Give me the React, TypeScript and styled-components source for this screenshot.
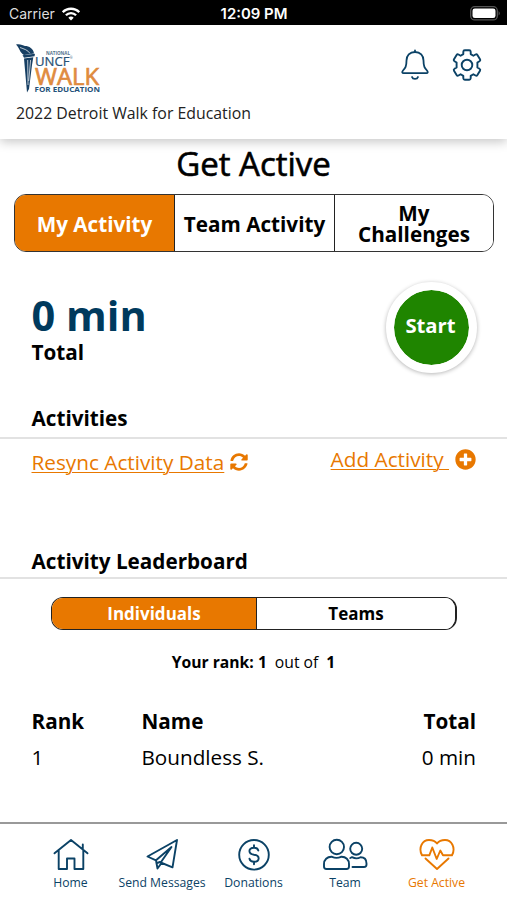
import styled, { createGlobalStyle } from "styled-components";
import { FaPlusCircle, FaSyncAlt } from "react-icons/fa";

const navy = "#0b4266";
const orange = "#e87800";

const Logo = () => (
  <svg width="86" height="54" viewBox="0 0 86 54" role="img" aria-label="UNCF">
    <g fill="#173f63">
      <path d="M0 1.500 C4 0.500 7 2.500 9 3 C13 3 17.500 5.500 18 10.500 L8 12 C3.500 9.500 4 5.500 0 1.500Z" />
      <path d="M6.500 12.300 L19 10.800 L18.500 13.200 L8 14.800Z" />
      <path d="M8 15.500 L17.300 14.300 L16 22 L13 46 L11 49.500Z" />
    </g>
    <path
      d="M4 4.500 C8 6 12 7 14 10.500 M11.700 17 L12 42 M14.600 17 L12.700 38"
      fill="none"
      stroke="#fff"
      strokeWidth="0.7"
    />
    <g fontFamily="Open Sans, sans-serif">
      <text x="30" y="12" fontSize="4.800" fontWeight="700" fill="#53708a" textLength="24" lengthAdjust="spacingAndGlyphs">
        NATIONAL
      </text>
      <text
        x="19"
        y="22.800"
        fontSize="12"
        fill="#285174"
        stroke="#285174"
        strokeWidth="0.2"
        textLength="34.500"
        lengthAdjust="spacingAndGlyphs"
      >
        UNCF
      </text>
      <text x="54" y="16" fontSize="3" fill="#285174">
        ®
      </text>
      <text
        x="19"
        y="41.700"
        fontSize="23"
        fill="#df8b3f"
        stroke="#df8b3f"
        strokeWidth="0.7"
        textLength="64"
        lengthAdjust="spacingAndGlyphs"
      >
        WALK
      </text>
      <text
        x="18.500"
        y="49.200"
        fontSize="7.200"
        fontWeight="700"
        fill="#24527a"
        textLength="65.500"
        lengthAdjust="spacingAndGlyphs"
      >
        FOR EDUCATION
      </text>
    </g>
  </svg>
);

const WifiIcon = () => (
  <svg width="18" height="14" viewBox="0 0 18 14" fill="none" stroke="#fff" strokeWidth="2.300">
    <path d="M0.800 5.200 C5.300 0.600 12.700 0.600 17.200 5.200" />
    <path d="M3.900 8.300 C6.700 5.400 11.300 5.400 14.100 8.300" />
    <path d="M9 13.500 L6.300 10.700 C7.800 9.200 10.200 9.200 11.700 10.700Z" fill="#fff" stroke="none" />
  </svg>
);

const BatteryIcon = () => (
  <svg width="31" height="15" viewBox="0 0 31 15">
    <rect x="0.700" y="0.700" width="26.600" height="13.200" rx="4" fill="none" stroke="#555" strokeWidth="1.300" />
    <rect x="2.500" y="2.500" width="23" height="9.600" rx="2.300" fill="#fff" />
    <path d="M28.600 5 Q31 7.300 28.600 9.600Z" fill="#555" />
  </svg>
);

const BellIcon = () => (
  <svg width="28" height="32" viewBox="0 0 28 32" fill="none" stroke={navy} strokeWidth="1.800" strokeLinecap="round" strokeLinejoin="round">
    <path d="M14 1.500 V3 M14 3 C8.700 3 5.500 6.800 5.500 11.500 C5.500 17.500 4.300 19 2 21.500 C0.700 23.100 1.200 24.200 2.600 24.200 H25.400 C26.800 24.200 27.300 23.100 26 21.500 C23.700 19 22.500 17.500 22.500 11.500 C22.500 6.800 19.300 3 14 3Z" />
    <path d="M11 28 C11.800 30.500 16.200 30.500 17 28" />
  </svg>
);

const GearIcon = () => (
  <svg width="32" height="32" viewBox="0 0 32 32" fill="none" stroke={navy} strokeWidth="1.900" strokeLinejoin="round">
    <path d="M12.300 2.700 Q12.400 1.300 13.800 1.300 H18.200 Q19.600 1.300 19.700 2.700 V5.100 L22.400 6.700 L24.500 5.500 Q25.700 4.900 26.400 6 L29 10.300 Q29.700 11.500 28.500 12.200 L26.400 13.500 V18.500 L28.500 19.800 Q29.700 20.500 29 21.700 L26.400 26 Q25.700 27.100 24.500 26.500 L22.400 25.300 L19.700 26.900 V29.300 Q19.600 30.700 18.200 30.700 H13.800 Q12.400 30.700 12.300 29.300 V26.900 L9.600 25.300 L7.500 26.500 Q6.300 27.100 5.600 26 L3 21.700 Q2.300 20.500 3.500 19.800 L5.600 18.500 V13.500 L3.500 12.200 Q2.300 11.500 3 10.300 L5.600 6 Q6.300 4.900 7.500 5.500 L9.600 6.700 L12.300 5.100Z" />
    <circle cx="16" cy="16" r="5.300" />
  </svg>
);

const navIconProps = {
  height: 34,
  fill: "none",
  stroke: "currentColor",
  strokeWidth: 1.9,
  strokeLinecap: "round",
  strokeLinejoin: "round",
} as const;

const HomeIcon = () => (
  <svg {...navIconProps} width="36" viewBox="0 0 36 34">
    <path d="M1.500 15.300 L18 2 L34.500 15.300 M29.800 11 V6.500 M5.700 12.500 V31 H14 V20.500 H21.500 V31 H30.300 V12.500" />
  </svg>
);

const SendIcon = () => (
  <svg {...navIconProps} width="34" viewBox="0 0 34 34">
    <path d="M32 2 L2.500 18.500 L11 22.300 L26.500 9 L15.700 24.500 L27.500 29.300Z M11 22.500 L12.500 30.500 L16.500 25 M12 25 L15 24" />
  </svg>
);

const DonateIcon = () => (
  <svg {...navIconProps} width="34" viewBox="0 0 34 34">
    <circle cx="17" cy="16.800" r="14.800" />
    <path d="M21.300 12.500 C20.800 10.500 19.200 9.800 17 9.800 C10.800 9.800 11 16 17 16.700 C23.400 17.300 23 23.700 17 23.700 C14.600 23.700 13 22.800 12.500 20.700 M17 7.300 V9.800 M17 23.700 V26.300" />
  </svg>
);

const TeamIcon = () => (
  <svg {...navIconProps} width="46" viewBox="0 0 46 34">
    <circle cx="14.800" cy="9" r="7.200" />
    <path d="M10 18.800 C5 18.500 2 22 2 26 V28.500 Q2 31 4.500 31 H24.500 Q27 31 27 28.500 V26 C27 22 24 18.500 19 18.800 C16 20.200 13 20.200 10 18.800Z" />
    <circle cx="34.200" cy="10.800" r="6" />
    <path d="M28.300 20 L30 19.200 C33 20.700 36 20.700 38.500 19.200 C42.500 19.200 44.500 22 44.500 25.500 V26.500 Q44.500 29 42 29 H30.500" />
  </svg>
);

const HeartIcon = () => (
  <svg {...navIconProps} width="36" viewBox="0 0 36 34">
    <path d="M3 17.300 C-1 9.500 3.500 2 10 2 C13.700 2 16.500 3.500 18 5.500 C19.500 3.500 22.300 2 26 2 C32.500 2 37 9.500 33 17.300 H24 L21.300 12.500 L17.700 21 L13.300 9.500 L10.300 17.300Z" />
    <path d="M6.500 20.500 L18 31 L29.500 20.500" />
  </svg>
);

const navItems = [
  { label: "Home", icon: <HomeIcon /> },
  { label: "Send Messages", icon: <SendIcon /> },
  { label: "Donations", icon: <DonateIcon /> },
  { label: "Team", icon: <TeamIcon /> },
  { label: "Get Active", icon: <HeartIcon />, active: true },
];

const leaders = [{ rank: 1, name: "Boundless S.", total: "0 min" }];

const App = () => (
  <Screen>
    <GlobalStyle />
    <StatusBar>
      <Carrier>
        Carrier <WifiIcon />
      </Carrier>
      <Time>12:09 PM</Time>
      <Battery>
        <BatteryIcon />
      </Battery>
    </StatusBar>
    <Header>
      <HeaderTop>
        <Logo />
        <Actions>
          <BellIcon />
          <GearIcon />
        </Actions>
      </HeaderTop>
      <EventName>2022 Detroit Walk for Education</EventName>
    </Header>
    <Main>
      <Title>Get Active</Title>
      <Tabs>
        <Tab $active>My Activity</Tab>
        <Tab>Team Activity</Tab>
        <Tab>
          My
          <br />
          Challenges
        </Tab>
      </Tabs>
      <Summary>
        <div>
          <Minutes>0 min</Minutes>
          <TotalLabel>Total</TotalLabel>
        </div>
        <StartButton>Start</StartButton>
      </Summary>
      <SectionTitle>Activities</SectionTitle>
      <Links>
        <ActionLink>
          <u>Resync Activity Data</u>
          <FaSyncAlt size={18} />
        </ActionLink>
        <ActionLink $raised>
          <u>Add Activity&nbsp;</u>
          <FaPlusCircle size={21} />
        </ActionLink>
      </Links>
      <SectionTitle $compact>Activity Leaderboard</SectionTitle>
      <Switch>
        <SwitchItem $active>Individuals</SwitchItem>
        <SwitchItem>Teams</SwitchItem>
      </Switch>
      <Rank>
        <strong>Your rank: 1</strong>
        <span>out of</span>
        <strong>1</strong>
      </Rank>
      <Table>
        <HeadRow>
          <span>Rank</span>
          <span>Name</span>
          <span>Total</span>
        </HeadRow>
        {leaders.map(({ rank, name, total }) => (
          <Row key={rank}>
            <span>{rank}</span>
            <span>{name}</span>
            <span>{total}</span>
          </Row>
        ))}
      </Table>
    </Main>
    <Nav>
      {navItems.map(({ label, icon, active }) => (
        <NavItem key={label} $active={active}>
          {icon}
          <span>{label}</span>
        </NavItem>
      ))}
    </Nav>
  </Screen>
);

const GlobalStyle = createGlobalStyle`
  * {
    box-sizing: border-box;
  }
  body {
    margin: 0;
    background: #fff;
  }
  button {
    font-family: inherit;
    padding: 0;
  }
  svg {
    display: block;
    flex: none;
  }
`;

const Screen = styled.div`
  width: 507px;
  height: 900px;
  display: flex;
  flex-direction: column;
  overflow: hidden;
  font-family: "Open Sans", sans-serif;
  color: #000;
  white-space: nowrap;
`;

const StatusBar = styled.div`
  height: 25px;
  flex: none;
  display: grid;
  grid-template-columns: 1fr auto 1fr;
  align-items: center;
  padding: 2px 6px 0 9px;
  background: #000;
  color: #fff;
  font-family: Inter, sans-serif;
  font-size: 14px;
`;
const Carrier = styled.div`
  display: flex;
  align-items: center;
  gap: 7px;
  color: #ddd;
`;
const Time = styled.div`
  margin-right: 2px;
  font-size: 14.900px;
  font-weight: 600;
`;
const Battery = styled.div`
  display: flex;
  justify-content: flex-end;
`;

const Header = styled.header`
  height: 114px;
  flex: none;
  padding: 18px 24px 0 16px;
  box-shadow: 0 3px 10px rgba(0, 0, 0, 0.22);
`;
const HeaderTop = styled.div`
  display: flex;
  justify-content: space-between;
`;
const Actions = styled.div`
  display: flex;
  gap: 22px;
  padding-top: 6px;
`;
const EventName = styled.div`
  margin-top: 5px;
  font-size: 15.850px;
  line-height: 22px;
  color: #222;
`;

const Main = styled.main`
  flex: 1;
`;
const Title = styled.h1`
  margin: 4px 0 0;
  height: 51px;
  font-size: 33px;
  line-height: 42px;
  font-weight: 400;
  text-align: center;
  -webkit-text-stroke: 0.6px #000;
`;

const Tabs = styled.div`
  display: grid;
  grid-template-columns: 160px 160px 1fr;
  height: 58px;
  margin: 0 13px 0 14px;
  border: 1px solid #333;
  border-radius: 12px;
  overflow: hidden;
`;
const Tab = styled.button<{ $active?: boolean }>`
  border: 0;
  border-right: 1px solid #222;
  background: ${({ $active }) => ($active ? orange : "#fff")};
  color: ${({ $active }) => ($active ? "#fff" : "#000")};
  font-size: 20.700px;
  line-height: 21px;
  font-weight: 700;
  padding-top: 2px;
  &:last-child {
    border-right: 0;
  }
`;

const Summary = styled.section`
  display: flex;
  justify-content: space-between;
  height: 151px;
  padding: 30px 30px 0 31.500px;
`;
const Minutes = styled.div`
  font-size: 41.500px;
  line-height: 56px;
  margin-top: 5px;
  font-weight: 700;
  color: #003a5d;
`;
const TotalLabel = styled.div`
  font-size: 20.700px;
  line-height: 28px;
  margin-top: -5px;
  font-weight: 700;
`;
const StartButton = styled.button`
  width: 91px;
  height: 91px;
  border: 8px solid #fff;
  border-radius: 50%;
  background: #1f8500;
  background-clip: padding-box;
  box-shadow: 0 1px 4px rgba(0, 0, 0, 0.3);
  color: #fff;
  font-size: 20.300px;
  font-weight: 700;
  padding: 0 2px 5px 0;
`;

const SectionTitle = styled.h2<{ $compact?: boolean }>`
  margin: 0;
  height: ${({ $compact }) => ($compact ? "33px" : "36px")};
  padding-left: 31.500px;
  border-bottom: 2px solid #e2e2e2;
  font-size: 20.700px;
  line-height: 30px;
  font-weight: 700;
`;
const Links = styled.div`
  display: flex;
  justify-content: space-between;
  height: 107px;
  padding: 8px 31px 0 31.500px;
`;
const ActionLink = styled.a<{ $raised?: boolean }>`
  display: flex;
  align-items: center;
  gap: 6px;
  height: 30px;
  margin-top: ${({ $raised }) => ($raised ? "-3px" : "0")};
  font-size: 20.750px;
  color: ${orange};
  u {
    text-underline-offset: 2px;
    text-decoration-thickness: 1px;
  }
`;

const Switch = styled.div`
  display: grid;
  grid-template-columns: 205px 1fr;
  height: 33px;
  margin: 18px 50px 0 51px;
  border: 1px solid #222;
  border-right-width: 2px;
  border-radius: 12px;
  overflow: hidden;
`;
const SwitchItem = styled.button<{ $active?: boolean }>`
  border: 0;
  border-right: ${({ $active }) => ($active ? "1px solid #222" : "0")};
  background: ${({ $active }) => ($active ? orange : "#fff")};
  color: ${({ $active }) => ($active ? "#fff" : "#000")};
  font-size: 17px;
  line-height: 24px;
  font-weight: 700;
`;
const Rank = styled.div`
  display: flex;
  justify-content: center;
  gap: 8px;
  margin-top: 21px;
  font-size: 15.700px;
  line-height: 22px;
`;

const Table = styled.div`
  padding: 30px 31px 0 31.500px;
`;
const Row = styled.div`
  display: grid;
  grid-template-columns: 110px 1fr auto;
  font-size: 20.700px;
  line-height: 36px;
`;
const HeadRow = styled(Row)`
  font-weight: 700;
`;

const Nav = styled.nav`
  height: 78px;
  flex: none;
  display: grid;
  grid-template-columns: repeat(5, 91.500px);
  justify-content: center;
  border-top: 2px solid #999;
  padding-top: 14px;
`;
const NavItem = styled.a<{ $active?: boolean }>`
  display: flex;
  flex-direction: column;
  align-items: center;
  gap: 2px;
  color: ${({ $active }) => ($active ? orange : navy)};
  font-size: 12.200px;
  line-height: 17px;
`;

export default App;
